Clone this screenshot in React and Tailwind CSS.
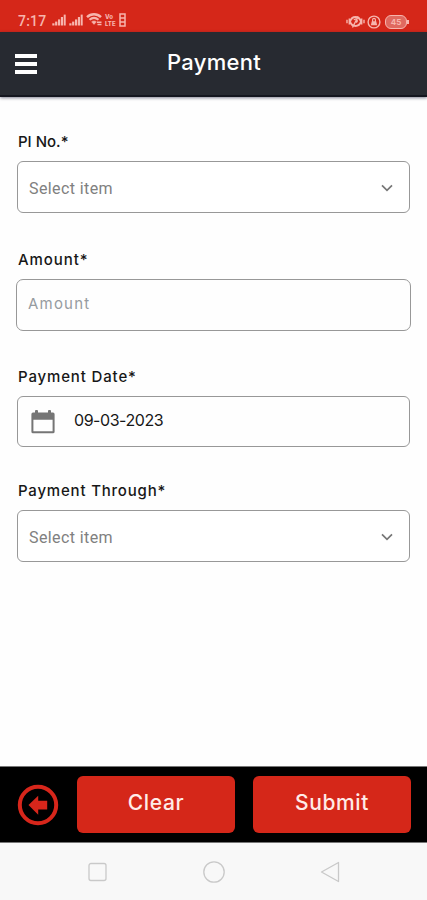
import React, { useState } from 'react';

const SignalIcon = () => (
    <svg className="h-[12px] w-[14px]" viewBox="0 0 14 12" fill="currentColor">
        <rect x="0.3" y="9.3" width="2.2" height="2.2" />
        <rect x="3.1" y="7.6" width="2.2" height="3.9" />
        <rect x="6" y="5.4" width="2.2" height="6.1" />
        <rect x="8.9" y="3" width="2.1" height="8.5" />
        <rect x="11.7" y="0.6" width="2" height="10.9" />
    </svg>
);

const WifiIcon = () => (
    <svg className="mb-[2px] h-[13px] w-[17px]" viewBox="0 0 17 13" fill="none" stroke="currentColor">
        <path d="M1 4.2C5 0.3 11 0.3 15 4.2" strokeWidth="2.4" />
        <path d="M3.5 6.8c2.7-2.4 6.3-2.4 9 0" strokeWidth="2.2" />
        <path d="M5.6 8.8c1.5-1.2 3.3-1.2 4.8 0L8 11.4z" fill="currentColor" strokeWidth="0.5" />
        <path d="M11 9.3h4.5M11.5 11.5h4" strokeWidth="1.5" />
    </svg>
);

const EyeIcon = () => (
    <svg className="h-[15px] w-[19px]" viewBox="0 0 19 15" fill="none" stroke="currentColor">
        <path d="M1 5.8v3.4M3.3 4.5v6M15.7 4.5v6M18 5.8v3.4" strokeWidth="1.4" />
        <path d="M4 7.5C6 1.5 13 1.5 15 7.5C13 13.5 6 13.5 4 7.5z" strokeWidth="2" />
        <path d="M8 6a1.7 1.7 0 1 1 2 2.4M6.5 13.5l5.6-11" strokeWidth="1.4" />
    </svg>
);

const LockIcon = () => (
    <svg className="h-[14px] w-[14px]" viewBox="0 0 14 14" fill="none" stroke="currentColor">
        <circle cx="7" cy="7" r="5.9" strokeWidth="1.4" />
        <path d="M5.6 7V4.8a1.4 1.4 0 0 1 2.8 0V7" strokeWidth="1.2" />
        <path d="M4.8 6.3h4.4l1 3.9H3.8z" fill="currentColor" stroke="none" />
    </svg>
);

const CalendarIcon = () => (
    <svg className="h-[24px] w-[24px]" viewBox="0 0 24 24" fill="#757575">
        <path
            fillRule="evenodd"
            d="M2 2.6h2V1a1 1 0 0 1 1-1h1a1 1 0 0 1 1 1V2.6h10V1a1 1 0 0 1 1-1h1a1 1 0 0 1 1 1V2.6h2a1.6 1.6 0 0 1 1.6 1.6v17.5a1.6 1.6 0 0 1-1.6 1.6H2a1.6 1.6 0 0 1-1.6-1.6V4.2a1.6 1.6 0 0 1 1.6-1.6zM2.4 9.8V21.2h19.2V9.8z"
        />
    </svg>
);

const BackIcon = () => (
    <svg className="h-[42px] w-[42px]" viewBox="0 0 42 42">
        <circle cx="21" cy="21" r="18.2" fill="none" stroke="#d7261b" strokeWidth="4" />
        <path d="M11.5 21l9.7-9.3v5h9v8.8h-9v5.2z" fill="#d7261b" />
    </svg>
);

const ChevronIcon = () => (
    <svg className="mt-[2px] h-[8px] w-[12px]" viewBox="0 0 12 8" fill="none" stroke="#777" strokeWidth="1.7">
        <path d="M1 1.3l5 5 5-5" />
    </svg>
);

const labelClass = "ml-px block h-6 whitespace-nowrap pt-px text-[15px] leading-6 font-[450] text-[#171717]";

const SelectBox = () => (
    <button className="mt-2 flex h-[52px] w-full items-center justify-between rounded-[6px] border border-[#989898] bg-white pr-4 pl-[11px]">
        <span className="pt-[3px] font-['Roboto',sans-serif] text-[16px] tracking-[0.4px] text-[#808080]">Select item</span>
        <ChevronIcon />
    </button>
);

const App = () => {
    const [amount, setAmount] = useState('');
    const [date, setDate] = useState('09-03-2023');

    return (
        <div className="flex h-[900px] w-[427px] flex-col overflow-hidden bg-[#fefefe] font-['Inter',sans-serif]">
            {/* Status bar */}
            <div className="flex h-8 shrink-0 items-end justify-between bg-[#d52719] pr-[18px] pb-[3px] pl-[18px] text-[#f7b5ad]">
                <div className="flex items-center">
                    <span className="w-[34px] pt-[2px] font-['Roboto',sans-serif] text-[14px] leading-4 font-medium tracking-[0.2px]">7:17</span>
                    <SignalIcon />
                    <span className="w-[3px]" />
                    <SignalIcon />
                    <span className="w-[3px]" />
                    <WifiIcon />
                    <span className="ml-[2px] flex w-[14px] flex-col text-[6px] leading-[7px] font-extrabold">
                        <span>Vo</span>
                        <span>LTE</span>
                    </span>
                    <svg className="h-[14px] w-[7px]" viewBox="0 0 7 14" fill="none" stroke="currentColor" strokeWidth="1.5">
                        <path d="M1 1h5v12H1zM1 5h5M1 9h5" />
                    </svg>
                </div>
                <div className="flex items-center">
                    <EyeIcon />
                    <span className="w-[2px]" />
                    <LockIcon />
                    <span className="w-[4px]" />
                    <div className="flex h-[14px] w-[22px] items-center justify-center rounded-[6px] border border-current bg-[#e0695f] text-[8px] font-bold">45</div>
                    <span className="h-1 w-[2px] bg-current" />
                </div>
            </div>

            {/* Header */}
            <div className="z-10 grid h-[65px] shrink-0 grid-cols-[53px_1fr_53px] items-center border-b-2 border-[#14161f] bg-[#272a31] shadow-[0_1px_3px_rgba(30,30,60,0.55)]">
                <button className="ml-[15px] flex w-[22px] flex-col gap-[4px]">
                    <span className="h-[4px] w-full bg-white" />
                    <span className="h-[4px] w-full bg-white" />
                    <span className="h-[4px] w-full bg-white" />
                </button>
                <h1 className="pb-[3px] pl-px text-center text-[22px] leading-8 font-medium tracking-[0.3px] text-white">Payment</h1>
            </div>

            {/* Form */}
            <div className="flex-1 px-[17px] pt-[32px]">
                <div>
                    <label className={labelClass}>PI No.*</label>
                    <SelectBox />
                </div>
                <div className="mt-[34px]">
                    <label className={`${labelClass} tracking-[0.95px]`}>Amount*</label>
                    <input
                        value={amount}
                        onChange={(e) => setAmount(e.target.value)}
                        placeholder="Amount"
                        className="-mx-px mt-2 block h-[52px] w-[395px] rounded-[7px] border border-[#989898] pb-[4px] pl-[11px] text-[15px] tracking-[1.2px] placeholder:text-[#969ba0] focus:outline-none"
                    />
                </div>
                <div className="mt-[33px]">
                    <label className={`${labelClass} tracking-[0.85px]`}>Payment Date*</label>
                    <div className="mt-2 flex h-[51px] items-center rounded-[6px] border border-[#989898] pl-[13px]">
                        <CalendarIcon />
                        <input
                            value={date}
                            onChange={(e) => setDate(e.target.value)}
                            className="ml-[19px] w-[200px] pb-[4px] text-[16px] tracking-[-0.45px] text-[#171717] focus:outline-none"
                        />
                    </div>
                </div>
                <div className="mt-[31px]">
                    <label className={`${labelClass} tracking-[0.8px]`}>Payment Through*</label>
                    <SelectBox />
                </div>
            </div>

            {/* Actions */}
            <div className="flex h-[77px] shrink-0 items-center border-y border-[#777] bg-black pl-[17px] text-[21px] font-medium tracking-[0.6px] text-[#ffebe8]">
                <BackIcon />
                <button className="ml-[18px] h-[57px] w-[158px] rounded-[6px] bg-[#d52719] pb-[4px]">Clear</button>
                <button className="ml-[18px] h-[57px] w-[158px] rounded-[6px] bg-[#d52719] pb-[4px]">Submit</button>
            </div>

            {/* Navigation bar */}
            <div className="flex h-[57px] shrink-0 items-center justify-center gap-[95px] bg-[#f8f8f8] pt-px">
                <svg className="h-[22px] w-[22px]" viewBox="0 0 22 22" fill="none" stroke="#c9c9c9" strokeWidth="1.3">
                    <rect x="3" y="2.5" width="17" height="17" rx="2" />
                </svg>
                <svg className="h-[22px] w-[22px]" viewBox="0 0 22 22" fill="none" stroke="#c9c9c9" strokeWidth="1.3">
                    <circle cx="11" cy="11" r="10.2" />
                </svg>
                <svg className="h-[22px] w-[22px]" viewBox="0 0 22 22" fill="none" stroke="#c9c9c9" strokeWidth="1.3" strokeLinejoin="round">
                    <path d="M1.5 11L18.5 1.5v19z" />
                </svg>
            </div>
        </div>
    );
};

export default App;
